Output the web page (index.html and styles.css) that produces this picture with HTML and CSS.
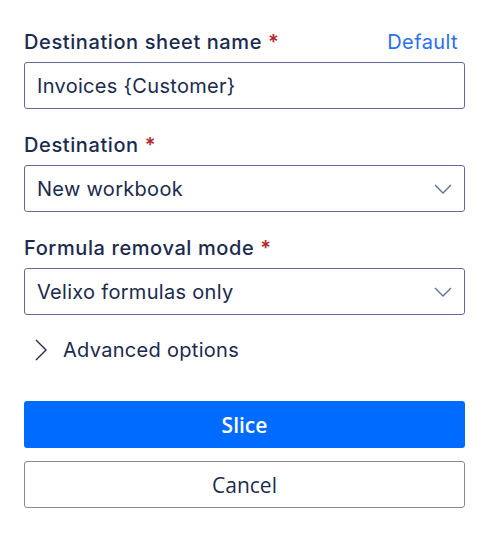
FILE: index.html
```html
<!DOCTYPE html>
<html>
<head>
<meta charset="utf-8">
<link rel="stylesheet" href="styles.css">
</head>
<body>
<div class="form">
  <div class="field">
    <div class="label-row">
      <label class="label">Destination sheet name <span class="req">*</span></label>
      <a class="link">Default</a>
    </div>
    <div class="control">Invoices {Customer}</div>
  </div>
  <div class="field">
    <div class="label-row"><label class="label">Destination <span class="req">*</span></label></div>
    <div class="control select">New workbook
      <svg class="chev" width="18" height="10" viewBox="0 0 18 10"><path d="M1 1 L9 9 L17 1" fill="none" stroke="#5a6e9a" stroke-width="1.3"/></svg>
    </div>
  </div>
  <div class="field">
    <div class="label-row"><label class="label">Formula removal mode <span class="req">*</span></label></div>
    <div class="control select">Velixo formulas only
      <svg class="chev" width="18" height="10" viewBox="0 0 18 10"><path d="M1 1 L9 9 L17 1" fill="none" stroke="#5a6e9a" stroke-width="1.3"/></svg>
    </div>
  </div>
  <div class="advanced">
    <svg width="12" height="22" viewBox="0 0 12 22"><path d="M1 1 L11 11 L1 21" fill="none" stroke="#1b2a4e" stroke-width="1.4"/></svg>
    <span>Advanced options</span>
  </div>
  <div class="buttons">
    <button class="btn primary">Slice</button>
    <button class="btn secondary">Cancel</button>
  </div>
</div>
</body>
</html>
```
FILE: styles.css
```css
html, body {
  margin: 0;
  padding: 0;
  background: #ffffff;
}
body {
  font-family: Inter, "Noto Sans", sans-serif;
  color: #1b2a4e;
}
.form {
  padding: 28px 22px 0 24px;
  display: flex;
  flex-direction: column;
}
.field {
  display: flex;
  flex-direction: column;
  gap: 8px;
  margin-bottom: 22px;
}
.label-row {
  display: flex;
  justify-content: space-between;
  align-items: center;
  height: 24px;
  padding-top: 2px;
}
.label {
  font-size: 20px;
  font-weight: 500;
  line-height: 24px;
  letter-spacing: 0.6px;
  color: #1b2a4e;
}
.req {
  color: #b3262d;
  font-weight: 600;
}
.link {
  font-size: 20px;
  line-height: 24px;
  letter-spacing: 0.4px;
  color: #2b6ff0;
  margin-right: 7px;
}
.control {
  height: 47px;
  box-sizing: border-box;
  border: 1px solid #5d6d95;
  border-radius: 3px;
  padding: 0 12px;
  display: flex;
  align-items: center;
  font-size: 20px;
  letter-spacing: 0.3px;
  color: #1b2a4e;
}
.select {
  justify-content: space-between;
}
.advanced {
  display: flex;
  align-items: center;
  gap: 16px;
  padding-left: 11px;
  height: 26px;
  font-size: 20px;
  letter-spacing: 0.3px;
}
.buttons {
  display: flex;
  flex-direction: column;
  gap: 13px;
  margin-top: 38px;
}
.btn {
  height: 47px;
  border-radius: 3px;
  font-family: "Open Sans", sans-serif;
  font-size: 21px;
  cursor: pointer;
}
.primary {
  background: #006cff;
  color: #ffffff;
  border: none;
  font-weight: 600;
}
.secondary {
  background: #ffffff;
  color: #1b2a4e;
  border: 1px solid #8a8a8a;
  font-weight: 500;
}
```
